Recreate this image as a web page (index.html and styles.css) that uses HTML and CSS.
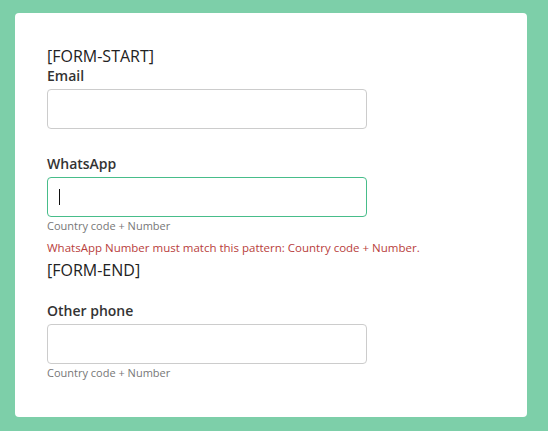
FILE: index.html
```html
<!DOCTYPE html>
<html lang="en">

<head>
  <meta charset="UTF-8" />
  <meta name="viewport" content="width=device-width, initial-scale=1.0" />
  <title>Contact form</title>
  <link rel="stylesheet" href="styles.css">
</head>

<body>
  <div class="card">
    <div class="marker">[FORM-START]</div>

    <div class="field field-first">
      <label for="email">Email</label>
      <input type="text" id="email" />
    </div>

    <div class="field">
      <label for="whatsapp">WhatsApp</label>
      <div class="input-wrap">
        <input type="text" id="whatsapp" class="active" />
        <span class="caret"></span>
      </div>
      <div class="help">Country code + Number</div>
      <div class="error">WhatsApp Number must match this pattern: Country code + Number.</div>
    </div>

    <div class="marker marker-end">[FORM-END]</div>

    <div class="field field-last">
      <label for="phone">Other phone</label>
      <input type="text" id="phone" />
      <div class="help">Country code + Number</div>
    </div>
  </div>
</body>

</html>
```

FILE: styles.css
```css
body {
  margin: 0;
  padding: 13px 15px;
  background: #7dcfa9;
  font-family: 'Open Sans', sans-serif;
  color: #222;
}

.card {
  width: 512px;
  box-sizing: border-box;
  background: #fff;
  border-radius: 4px;
  padding: 33px 32px 37px;
}

.marker {
  font-size: 16px;
  line-height: 20px;
  color: #222;
}

.marker-end {
  margin-top: 4px;
}

.field {
  margin-top: 26px;
}

.field-first {
  margin-top: 1px;
}

.field-last {
  margin-top: 22px;
}

label {
  display: block;
  font-size: 14px;
  line-height: 18px;
  font-weight: 600;
  color: #333;
  margin-bottom: 4px;
}

input {
  display: block;
  width: 320px;
  height: 40px;
  box-sizing: border-box;
  border: 1px solid #cccccc;
  border-radius: 4px;
  padding: 0 11px;
  font-family: inherit;
  font-size: 14px;
  outline: none;
}

input.active {
  border-color: #47bd8a;
}

/* wrapper so the text cursor can sit over the active input */
.input-wrap {
  position: relative;
  width: 320px;
}

.caret {
  position: absolute;
  left: 12px;
  top: 12px;
  width: 1px;
  height: 16px;
  background: #111;
}

.help {
  margin-top: 2px;
  font-size: 11px;
  line-height: 14px;
  color: #777;
}

.error {
  margin-top: 7px;
  font-size: 11.5px;
  line-height: 16px;
  color: #b8403c;
}
```
